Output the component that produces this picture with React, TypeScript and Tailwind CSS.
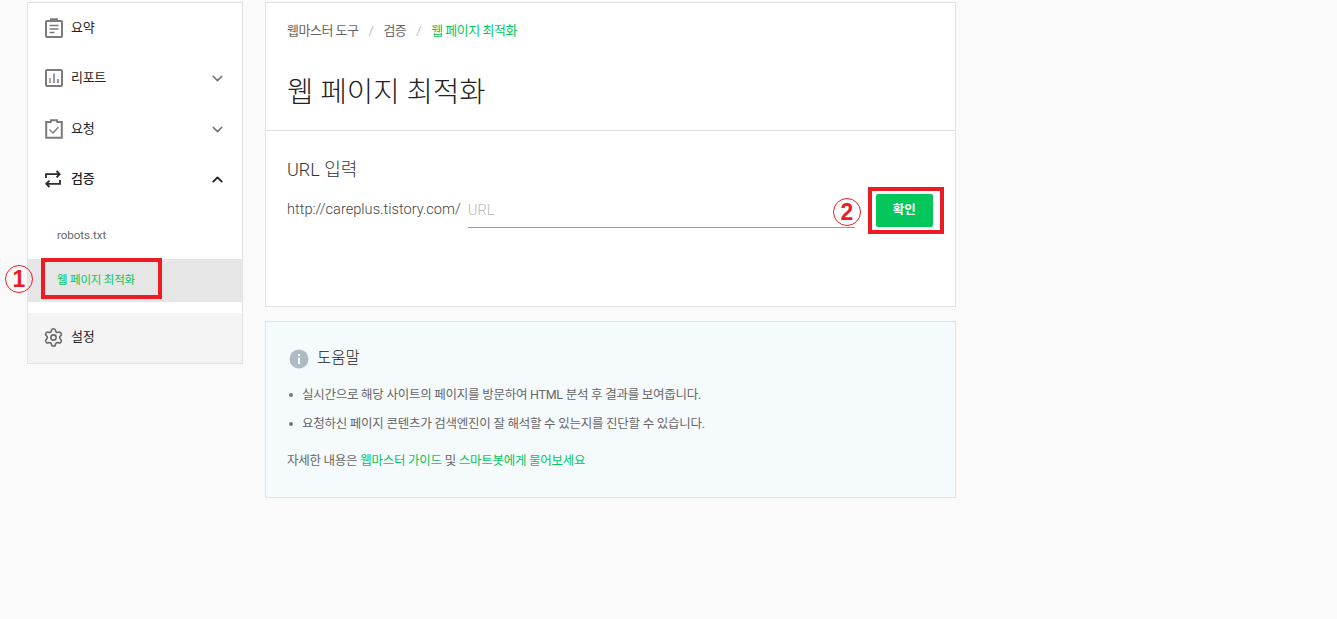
import { ChevronDown, ChevronUp, Settings } from 'lucide-react';

const font = 'font-["Roboto","Noto_Sans_CJK_KR",sans-serif]';

function SummaryIcon() {
  return (
    <svg width="18" height="20" viewBox="0 0 18 20" fill="none" stroke="#7b7b7b" strokeWidth="2">
      <rect x="1" y="3" width="16" height="16" rx="1" />
      <path d="M6 3V1.2h6V3" />
      <path d="M4.5 7.5h9M4.5 11h9M4.5 14.5h5" strokeWidth="1.3" />
    </svg>
  );
}

function ReportIcon() {
  return (
    <svg width="18" height="18" viewBox="0 0 18 18" fill="none" stroke="#7b7b7b" strokeWidth="2">
      <rect x="1" y="1" width="16" height="16" rx="1" />
      <path d="M5 14V9" stroke="#b58a5c" strokeWidth="1.6" />
      <path d="M9 14V4.5" stroke="#6f7fb8" strokeWidth="1.6" />
      <path d="M13 14v-4" stroke="#8f7a63" strokeWidth="1.6" />
    </svg>
  );
}

function RequestIcon() {
  return (
    <svg width="18" height="20" viewBox="0 0 18 20" fill="none" stroke="#7b7b7b" strokeWidth="2">
      <path d="M6 3H1.2v15.8h15.6V3H12" />
      <path d="M6 3.6V1.2h6v2.4" />
      <path d="M4.5 10.5 8 14l5.5-6" strokeWidth="1.4" />
    </svg>
  );
}

function VerifyIcon() {
  return (
    <svg width="16" height="18" viewBox="0 0 16 18" fill="none" stroke="#2b2b2b" strokeWidth="1.8">
      <path d="M1 8V4.2h13.5M11.5 1l3.2 3.2-3.2 3.2" />
      <path d="M15 10v3.8H1.5M4.5 10.6 1.3 13.8 4.5 17" />
    </svg>
  );
}

function Marker({ n }: { n: string }) {
  return (
    <span className="flex h-[28px] w-[28px] items-center justify-center rounded-full border border-[#ed1c24] font-['Liberation_Sans',sans-serif] text-[23px] font-bold leading-none text-[#ed1c24]">
      {n}
    </span>
  );
}

function NavRow({ icon, label, chevron, medium }: { icon: React.ReactNode; label: string; chevron?: 'up' | 'down'; medium?: boolean }) {
  return (
    <div className="flex h-[50px] items-center pl-[17px] pr-[16px]">
      <span className="flex w-[26px] justify-start">{icon}</span>
      <span className={`text-[13px] tracking-[-0.3px] text-[#222] ${medium ? 'font-medium' : ''}`}>{label}</span>
      {chevron === 'down' && <ChevronDown className="ml-auto h-[17px] w-[17px] text-[#777]" strokeWidth={2.2} />}
      {chevron === 'up' && <ChevronUp className="ml-auto h-[17px] w-[17px] text-[#222]" strokeWidth={2.6} />}
    </div>
  );
}

export default function App() {
  return (
    <div className={`${font} flex min-h-[619px] items-start gap-[22px] bg-[#fafafa] pl-[27px] pt-[2px]`}>
      {/* Sidebar */}
      <aside className="relative w-[216px] border border-[#e2e2e2] bg-white">
        <NavRow icon={<SummaryIcon />} label="요약" />
        <NavRow icon={<ReportIcon />} label="리포트" chevron="down" />
        <div className="pt-[1px]">
          <NavRow icon={<RequestIcon />} label="요청" chevron="down" />
        </div>
        <NavRow icon={<VerifyIcon />} label="검증" chevron="up" medium />
        <div className="pb-[11px] pt-[12px]">
          <div className="flex h-[43px] items-center pb-[4px] pl-[29px] text-[11.5px] text-[#666]">robots.txt</div>
          <div className="flex h-[43px] items-center bg-[#e6e6e6] pl-[29px] text-[11.5px] tracking-[-0.2px] text-[#03c75a]">웹 페이지 최적화</div>
        </div>
        <div className="flex h-[50px] items-center bg-[#f4f4f4] pb-[2px] pl-[15px]">
          <Settings className="mr-[7px] h-[21px] w-[21px] text-[#666]" strokeWidth={1.8} />
          <span className="text-[13px] tracking-[-0.3px] text-[#222]">설정</span>
        </div>
        <div className="absolute left-[13px] top-[255px] h-[41px] w-[121px] border-[4px] border-[#ed1c24]" />
        <div className="absolute left-[-23px] top-[262px]"><Marker n="1" /></div>
      </aside>

      {/* Main */}
      <main className="flex w-[691px] flex-col gap-[14px]">
        <section className="relative h-[305px] border border-[#e2e2e2] bg-white">
          <div className="h-[128px] border-b border-[#e2e2e2] px-[21px] pt-[18px]">
            <div className="flex items-center text-[13px] tracking-[-0.5px] text-[#666]">
              <span>웹마스터 도구</span>
              <span className="mx-[10px] text-[#bbb]">/</span>
              <span>검증</span>
              <span className="mx-[10px] text-[#bbb]">/</span>
              <span className="text-[#03c75a]">웹 페이지 최적화</span>
            </div>
            <h1 className="mt-[31px] text-[28.7px] font-light leading-[40px] text-[#222]">웹 페이지 최적화</h1>
          </div>
          <div className="px-[21px] pt-[26px]">
            <div className="text-[18px] font-light leading-[26px] text-[#333]">URL 입력</div>
            <div className="mt-[9px] flex items-center">
              <span className="text-[14.6px] font-light text-[#444]">http://careplus.tistory.com/</span>
              <div className="ml-[7px] flex h-[36px] w-[387px] items-center border-b border-[#999] pt-[2px] text-[14.6px] font-light text-[#bbb]">URL</div>
              <div className="ml-[21px] flex h-[33px] w-[57px] items-center justify-center rounded-[2px] bg-[#03c75a] text-[12.5px] font-bold text-white">확인</div>
            </div>
          </div>
          <div className="absolute left-[602px] top-[184px] h-[47px] w-[76px] border-[4px] border-[#ed1c24]" />
          <div className="absolute left-[567px] top-[195px]"><Marker n="2" /></div>
        </section>

        <section className="h-[177px] border border-[#e2e2e2] bg-[#f5fafd] px-[21px] pt-[25px]">
          <div className="flex items-center">
            <svg width="20" height="20" viewBox="0 0 20 20" className="ml-[2px]">
              <circle cx="10" cy="10" r="9.5" fill="#aebbc4" />
              <rect x="9" y="8.5" width="2" height="6.5" fill="#fff" />
              <rect x="9" y="5" width="2" height="2" fill="#fff" />
            </svg>
            <span className="ml-[8px] text-[15.5px] font-light text-[#222]">도움말</span>
          </div>
          <ul className="mt-[14px] flex flex-col gap-[9px] text-[12.5px] tracking-[-0.25px] text-[#666]">
            <li className="flex h-[20px] items-center pt-[2px]"><span className="ml-[2px] mr-[9px] h-[4px] w-[4px] rounded-full bg-[#777]" />실시간으로 해당 사이트의 페이지를 방문하여 HTML 분석 후 결과를 보여줍니다.</li>
            <li className="flex h-[20px] items-center pt-[2px]"><span className="ml-[2px] mr-[9px] h-[4px] w-[4px] rounded-full bg-[#777]" />요청하신 페이지 콘텐츠가 검색엔진이 잘 해석할 수 있는지를 진단할 수 있습니다.</li>
          </ul>
          <p className="mt-[19px] text-[12.5px] tracking-[-0.25px] text-[#666]">
            자세한 내용은 <span className="text-[#03c75a]">웹마스터 가이드</span> 및 <span className="text-[#03c75a]">스마트봇에게 물어보세요</span>
          </p>
        </section>
      </main>
    </div>
  );
}
